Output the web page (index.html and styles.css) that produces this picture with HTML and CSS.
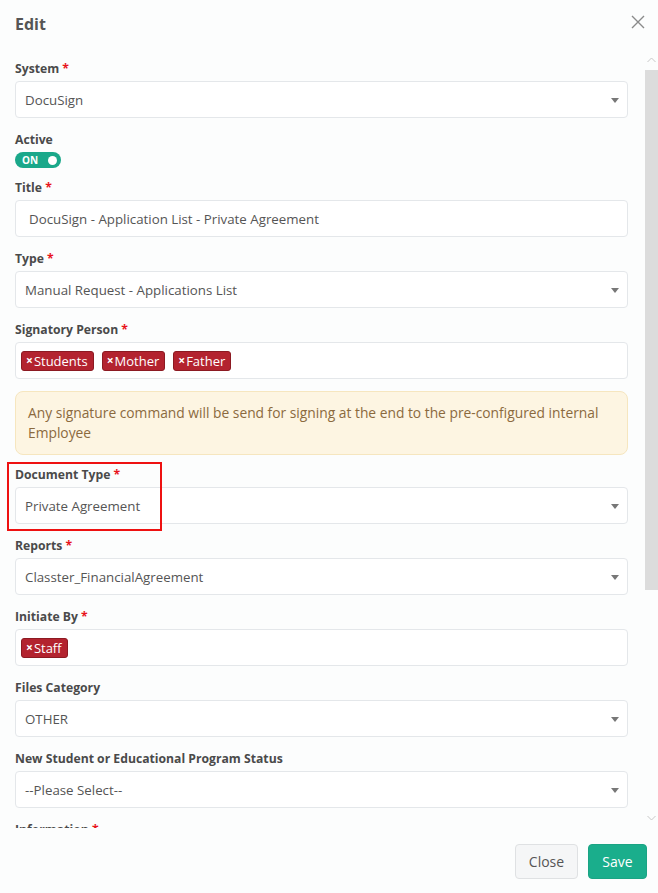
FILE: index.html
```html
<!DOCTYPE html>
<html lang="en">
<head>
<meta charset="utf-8">
<title>Edit</title>
<link rel="stylesheet" href="styles.css">
</head>
<body>
<div class="modal">
  <div class="modal-header">
    <h1 class="modal-title">Edit</h1>
    <button class="close-x" aria-label="Close">
      <svg width="14" height="14" viewBox="0 0 14 14"><path d="M1 1L13 13M13 1L1 13" stroke="#8a8a8a" stroke-width="1.4" fill="none"/></svg>
    </button>
  </div>
  <div class="modal-main">
    <div class="modal-body">
      <div class="field">
        <label class="label">System <span class="req">*</span></label>
        <div class="control select"><span class="value">DocuSign</span><span class="caret"></span></div>
      </div>
      <div class="field field-active">
        <label class="label">Active</label>
        <div class="toggle"><span class="toggle-text">ON</span><span class="knob"></span></div>
      </div>
      <div class="field">
        <label class="label">Title <span class="req">*</span></label>
        <div class="control text"><span class="value">DocuSign - Application List - Private Agreement</span></div>
      </div>
      <div class="field">
        <label class="label">Type <span class="req">*</span></label>
        <div class="control select"><span class="value">Manual Request - Applications List</span><span class="caret"></span></div>
      </div>
      <div class="field">
        <label class="label">Signatory Person <span class="req">*</span></label>
        <div class="control tags">
          <span class="tag"><span class="tag-x">×</span>Students</span>
          <span class="tag"><span class="tag-x">×</span>Mother</span>
          <span class="tag"><span class="tag-x">×</span>Father</span>
        </div>
      </div>
      <div class="alert">Any signature command will be send for signing at the end to the pre-configured internal Employee</div>
      <div class="field highlighted">
        <label class="label">Document Type <span class="req">*</span></label>
        <div class="control select"><span class="value">Private Agreement</span><span class="caret"></span></div>
        <div class="highlight-box"></div>
      </div>
      <div class="field">
        <label class="label">Reports <span class="req">*</span></label>
        <div class="control select"><span class="value">Classter_FinancialAgreement</span><span class="caret"></span></div>
      </div>
      <div class="field">
        <label class="label">Initiate By <span class="req">*</span></label>
        <div class="control tags">
          <span class="tag"><span class="tag-x">×</span>Staff</span>
        </div>
      </div>
      <div class="field">
        <label class="label">Files Category</label>
        <div class="control select"><span class="value">OTHER</span><span class="caret"></span></div>
      </div>
      <div class="field">
        <label class="label">New Student or Educational Program Status</label>
        <div class="control select"><span class="value">--Please Select--</span><span class="caret"></span></div>
      </div>
      <div class="field">
        <label class="label">Information <span class="req">*</span></label>
        <div class="control editor"></div>
      </div>
    </div>
    <div class="scrollbar" aria-hidden="true">
      <div class="sb-btn">
        <svg width="9" height="6" viewBox="0 0 9 6"><path d="M0.5 5L4.5 1L8.5 5" stroke="#c8c8c8" stroke-width="1" fill="none"/></svg>
      </div>
      <div class="sb-track"><div class="sb-thumb"></div></div>
      <div class="sb-btn">
        <svg width="9" height="6" viewBox="0 0 9 6"><path d="M0.5 1L4.5 5L8.5 1" stroke="#c8c8c8" stroke-width="1" fill="none"/></svg>
      </div>
    </div>
  </div>
  <div class="modal-footer">
    <button class="btn btn-close">Close</button>
    <button class="btn btn-save">Save</button>
  </div>
</div>
</body>
</html>
```
FILE: styles.css
```css
html, body {
  margin: 0;
  padding: 0;
  height: 100%;
}
body {
  background: #fcfdfd;
  font-family: "Open Sans", "Noto Sans", sans-serif;
  color: #555;
  overflow: hidden;
}
.modal {
  display: flex;
  flex-direction: column;
  height: 893px;
}
.modal-header {
  height: 50px;
  flex: none;
  display: flex;
  align-items: center;
  justify-content: space-between;
  padding: 0 13px 0 15px;
  box-sizing: border-box;
}
.modal-title {
  margin: 0;
  font-size: 16px;
  font-weight: 700;
  color: #555;
  position: relative;
  top: -1px;
}
.close-x {
  border: 0;
  background: none;
  padding: 0;
  width: 14px;
  height: 14px;
  display: flex;
  position: relative;
  top: -3px;
}
.modal-main {
  height: 778px;
  flex: none;
  display: flex;
}
.modal-body {
  flex: 1;
  min-width: 0;
  overflow: hidden;
  padding: 9px 17px 0 15px;
}
.scrollbar {
  width: 13px;
  flex: none;
  display: flex;
  flex-direction: column;
}
.sb-btn {
  height: 20px;
  flex: none;
  display: flex;
  align-items: center;
  justify-content: center;
}
.sb-track {
  flex: 1;
}
.sb-thumb {
  height: 520px;
  background: #dcdcdc;
}
.field {
  margin-bottom: 12px;
}
.field-active {
  margin-bottom: 10px;
}
.field.highlighted {
  position: relative;
}
.label {
  display: block;
  font-size: 12.2px;
  font-weight: 700;
  line-height: 19px;
  color: #4a4a4a;
  margin-bottom: 3px;
}
.req {
  color: #e8141c;
}
.control {
  height: 37px;
  box-sizing: border-box;
  background: #fff;
  border: 1px solid #e4e7ea;
  border-radius: 4px;
  display: flex;
  align-items: center;
  font-size: 13.3px;
  color: #555;
}
.control.select {
  padding: 0 8px 0 9px;
  justify-content: space-between;
}
.control.text {
  padding: 0 13px;
}
.caret {
  width: 0;
  height: 0;
  border-left: 4.5px solid transparent;
  border-right: 4.5px solid transparent;
  border-top: 5px solid #777;
  margin-top: 2px;
}
.control.tags {
  padding: 0 5px;
  gap: 8px;
}
.tag {
  display: inline-flex;
  align-items: center;
  height: 20px;
  box-sizing: border-box;
  padding: 0 5px 0 4px;
  background: #b3232f;
  border: 1px solid #8c1a22;
  border-radius: 3px;
  color: #fff;
  font-size: 13px;
  line-height: 18px;
}
.tag-x {
  font-weight: 700;
  font-size: 12px;
  margin-right: 1px;
}
.toggle {
  width: 46px;
  height: 16px;
  border-radius: 8px;
  background: #1aa88a;
  display: flex;
  align-items: center;
  justify-content: space-between;
  padding: 0 4px 0 7px;
  box-sizing: border-box;
  margin-top: 2px;
}
.toggle-text {
  color: #fff;
  font-size: 10px;
  font-weight: 700;
  line-height: 16px;
}
.knob {
  width: 9px;
  height: 9px;
  border-radius: 50%;
  background: #fff;
}
.alert {
  background: #fdf5e2;
  border: 1px solid #f6e6bf;
  border-radius: 8px;
  color: #8b6a3e;
  font-size: 13.8px;
  line-height: 20px;
  padding: 11px 12px;
  margin-bottom: 10px;
}
.highlight-box {
  position: absolute;
  left: -8px;
  top: -3px;
  width: 155px;
  height: 69px;
  border: 2px solid #ee1111;
  box-sizing: border-box;
}
.control.editor {
  height: 300px;
}
.modal-footer {
  flex: none;
  height: 65px;
  display: flex;
  justify-content: flex-end;
  align-items: flex-start;
  padding: 16px 11px 0 0;
  box-sizing: border-box;
  gap: 10px;
}
.btn {
  height: 35px;
  border-radius: 4px;
  font-family: "Open Sans", "Noto Sans", sans-serif;
  font-size: 14px;
  padding: 0 12px;
  cursor: pointer;
}
.btn-close {
  background: #f5f6f7;
  border: 1px solid #dfe1e3;
  color: #555;
  width: 63px;
}
.btn-save {
  background: #1aae8c;
  border: 1px solid #1aa484;
  color: #fff;
  width: 59px;
}
```
